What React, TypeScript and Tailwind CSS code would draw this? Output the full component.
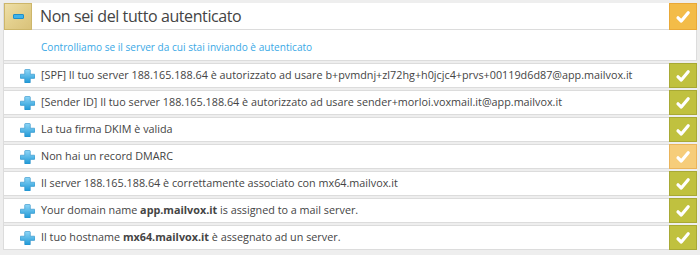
import React from "react";

const Check = () => (
  <svg width="16" height="14" viewBox="0 0 16 14">
    <path d="M3 7.8 L6.3 11 L13.2 2.8" fill="none" stroke="#fff" strokeWidth="3.2" strokeLinecap="round" strokeLinejoin="round" />
  </svg>
);

const Plus = () => (
  <svg width="15" height="14" viewBox="0 0 15 14">
    <defs>
      <linearGradient id="pg" x1="0" y1="0" x2="0" y2="1">
        <stop offset="0" stopColor="#8fd6f7" />
        <stop offset="1" stopColor="#1d98d6" />
      </linearGradient>
    </defs>
    <path
      d="M5.5 0.5 h4 a0.8 0.8 0 0 1 0.8 0.8 v3.9 h3.9 a0.8 0.8 0 0 1 0.8 0.8 v2.6 a0.8 0.8 0 0 1 -0.8 0.8 h-3.9 v3.9 a0.8 0.8 0 0 1 -0.8 0.8 h-4 a0.8 0.8 0 0 1 -0.8 -0.8 v-3.9 h-3.9 a0.8 0.8 0 0 1 -0.8 -0.8 v-2.6 a0.8 0.8 0 0 1 0.8 -0.8 h3.9 v-3.9 a0.8 0.8 0 0 1 0.8 -0.8 z"
      fill="url(#pg)"
      stroke="#2a8fc8"
      strokeWidth="0.6"
    />
  </svg>
);

type Row = { text: React.ReactNode; color: "green" | "light" };

const rows: Row[] = [
  { text: "[SPF] Il tuo server 188.165.188.64 è autorizzato ad usare b+pvmdnj+zl72hg+h0jcjc4+prvs+00119d6d87@app.mailvox.it", color: "green" },
  { text: "[Sender ID] Il tuo server 188.165.188.64 è autorizzato ad usare sender+morloi.voxmail.it@app.mailvox.it", color: "green" },
  { text: "La tua firma DKIM è valida", color: "green" },
  { text: "Non hai un record DMARC", color: "light" },
  { text: "Il server 188.165.188.64 è correttamente associato con mx64.mailvox.it", color: "green" },
  {
    text: (
      <>
        Your domain name <b className="font-bold">app.mailvox.it</b> is assigned to a mail server.
      </>
    ),
    color: "green",
  },
  {
    text: (
      <>
        Il tuo hostname <b className="font-bold">mx64.mailvox.it</b> è assegnato ad un server.
      </>
    ),
    color: "green",
  },
];

export default function App() {
  return (
    <div
      className="w-[700px] h-[255px] bg-[#eeeeee] pt-[3px] pl-[3px] pr-[3px] overflow-hidden"
      style={{ fontFamily: '"Open Sans", "Noto Sans", sans-serif' }}
    >
      <div className="flex flex-col border-l border-[#dcdcdc]">
        {/* header */}
        <div className="flex h-[27px] bg-white border-b border-[#dcdcdc]">
          <div className="w-[28px] h-[27px] flex items-center justify-center border border-[#cdb66a] bg-gradient-to-br from-[#eedfa8] via-[#e3cf8c] to-[#d9c27a]">
            <div className="w-[11px] h-[5px] rounded-[1px] bg-[#3fb2ea] border border-[#1f8fc9]" />
          </div>
          <div className="flex-1 pl-[8px] flex items-center text-[16px] text-[#444] leading-none tracking-[-0.4px]">
            Non sei del tutto autenticato
          </div>
          <div className="w-[28px] h-[27px] flex items-center justify-center bg-[#f3bc48] border border-[#e9a938]">
            <Check />
          </div>
        </div>
        {/* description */}
        <div className="h-[31px] bg-white border-b border-[#dcdcdc] border-r flex items-center pt-[5px] pl-[37px] text-[10.1px] text-[#3aa9e6]">
          Controlliamo se il server da cui stai inviando è autenticato
        </div>
        {rows.map((r, i) => (
          <div key={i} className="mt-[2px] h-[25px] bg-white border-y border-[#dcdcdc] flex items-center">
            <div className="w-[37px] flex justify-center pl-[10px] pr-[1px]">
              <Plus />
            </div>
            <div className="flex-1 text-[10.8px] text-[#444] whitespace-nowrap">{r.text}</div>
            <div
              className={
                r.color === "green"
                  ? "w-[28px] h-[25px] -my-px flex items-center justify-center bg-[#c0c13f] border border-[#a8a935]"
                  : "w-[28px] h-[25px] -my-px flex items-center justify-center bg-[#f6cd7a] border border-[#eab45a]"
              }
            >
              <Check />
            </div>
          </div>
        ))}
      </div>
    </div>
  );
}
